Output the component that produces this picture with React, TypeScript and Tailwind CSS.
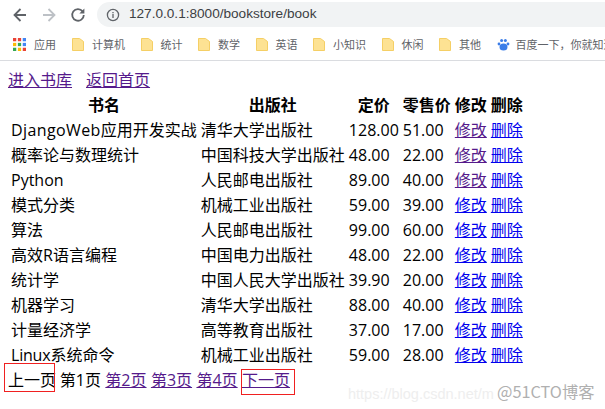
import React from "react";

const font = { fontFamily: '"Open Sans", "Noto Sans CJK SC", sans-serif' };
const cjk = { fontFamily: '"Noto Sans CJK SC", sans-serif' };
const rows: [React.ReactNode, string, string, string, boolean][] = [
  [<><span className="tracking-[0.4px]">DjangoWeb</span>应用开发实战</>, "清华大学出版社", "128.00", "51.00", true],
  ["概率论与数理统计", "中国科技大学出版社", "48.00", "22.00", true],
  ["Python", "人民邮电出版社", "89.00", "40.00", true],
  ["模式分类", "机械工业出版社", "59.00", "39.00", false],
  ["算法", "人民邮电出版社", "99.00", "60.00", false],
  ["高效R语言编程", "中国电力出版社", "48.00", "22.00", false],
  ["统计学", "中国人民大学出版社", "39.90", "20.00", false],
  ["机器学习", "清华大学出版社", "88.00", "40.00", false],
  ["计量经济学", "高等教育出版社", "37.00", "17.00", false],
  [<><span className="tracking-[-0.2px]">Linux</span>系统命令</>, "机械工业出版社", "59.00", "28.00", false],
];
const bookmarks = ["计算机", "统计", "数学", "英语", "小知识", "休闲", "其他"];

function Folder() {
  return (
    <svg width="12" height="13" viewBox="0 0 12 13" className="shrink-0">
      <path d="M.5.5h7l4 3v9H.5z" fill="#fde293" stroke="#f5cf65" />
    </svg>
  );
}

export default function App() {
  return (
    <div className="w-[605px] h-[409px] overflow-hidden bg-white text-[16px] text-black relative font-['Liberation_Sans',sans-serif]">
      <div className="h-[29px] flex items-center pl-[12px] gap-[13px]">
        <svg width="16" height="16" viewBox="0 0 16 16" fill="none" stroke="#5f6368" strokeWidth="1.8"><path d="M14 8H2.5M8.5 2 2.5 8l6 6" /></svg>
        <svg width="16" height="16" viewBox="0 0 16 16" fill="none" stroke="#bdc1c6" strokeWidth="1.8"><path d="M2 8h11.5M7.5 2l6 6-6 6" /></svg>
        <svg width="16" height="16" viewBox="0 0 16 16" fill="none" stroke="#5f6368" strokeWidth="1.8"><path d="M12.6 4.4A5.8 5.8 0 1 0 13.8 8" /><path d="M14.4 1.6v5H9.4z" fill="#5f6368" stroke="none" /></svg>
        <div className="flex-1 h-[25px] ml-[-2px] rounded-l-full bg-[#f1f3f4] flex items-center pl-[9px] gap-[9px]">
          <svg width="14" height="14" viewBox="0 0 14 14" fill="none" stroke="#5f6368" strokeWidth="1.3"><circle cx="7" cy="7" r="5.6" /><path d="M7 6v4M7 4v1.2" /></svg>
          <span className="text-[13.6px] text-[#3c4043]">127.0.0.1:8000/bookstore/book</span>
        </div>
      </div>
      <div className="h-[32px] border-b border-[#dadce0] flex items-center pl-[13px] text-[11px] text-[#5f6368] whitespace-nowrap" style={cjk}>
        <svg width="13" height="13" viewBox="0 0 12 12" className="shrink-0">
          <rect x="0" y="0" width="3" height="3" fill="#ea4335" /><rect x="4.5" y="0" width="3" height="3" fill="#ea4335" /><rect x="9" y="0" width="3" height="3" fill="#4285f4" />
          <rect x="0" y="4.5" width="3" height="3" fill="#fbbc05" /><rect x="4.5" y="4.5" width="3" height="3" fill="#34a853" /><rect x="9" y="4.5" width="3" height="3" fill="#4285f4" />
          <rect x="0" y="9" width="3" height="3" fill="#34a853" /><rect x="4.5" y="9" width="3" height="3" fill="#fbbc05" /><rect x="9" y="9" width="3" height="3" fill="#ea4335" />
        </svg>
        <span className="ml-[8px] mr-[16px]">应用</span>
        {bookmarks.map((b) => (
          <span key={b} className="flex items-center gap-[8px] mr-[15.5px]"><Folder />{b}</span>
        ))}
        <svg width="13" height="13" viewBox="0 0 13 13" className="shrink-0 mr-[6px]" fill="#3b7de8">
          <ellipse cx="6.5" cy="9" rx="4" ry="3.5" /><circle cx="2" cy="6" r="1.4" /><circle cx="11" cy="6" r="1.4" /><circle cx="4.6" cy="2.6" r="1.5" /><circle cx="8.4" cy="2.6" r="1.5" />
        </svg>
        <span>百度一下，你就知道</span>
      </div>
      <div className="pt-[8px] pl-[8px]" style={font}>
        <div className="h-[23px] leading-[23px]">
          <a className="underline text-[#551a8b]">进入书库</a>
          <a className="underline text-[#551a8b] ml-[14px]">返回首页</a>
        </div>
        <table className="border-separate border-spacing-[2px] leading-[23px]">
          <thead>
            <tr>
              {["书名", "出版社", "定价", "零售价", "修改", "删除"].map((h, i) => (
                <th key={h} className={(i === 0 ? "min-w-[187px] " : "") + "px-[1px] py-0 font-bold text-center"}>{h}</th>
              ))}
            </tr>
          </thead>
          <tbody>
            {rows.map((r, i) => (
              <tr key={i}>
                <td className="px-[1px] py-0 whitespace-nowrap">{r[0]}</td>
                <td className="px-[1px] py-0 whitespace-nowrap">{r[1]}</td>
                <td className="px-[1px] py-0">{r[2]}</td>
                <td className="px-[1px] py-0">{r[3]}</td>
                <td className="px-[1px] py-0"><a className={"underline " + (r[4] ? "text-[#551a8b]" : "text-[#0000ee]")}>修改</a></td>
                <td className="px-[1px] py-0"><a className="underline text-[#0000ee]">删除</a></td>
              </tr>
            ))}
          </tbody>
        </table>
        <div className="flex gap-[4.4px] h-[24px] leading-[24px] whitespace-nowrap mt-[-1px]">
          <span className="mr-[-0.6px]">上一页</span>
          <span>第1页</span>
          <a className="underline text-[#551a8b]">第2页</a>
          <a className="underline text-[#551a8b]">第3页</a>
          <a className="underline text-[#551a8b]">第4页</a>
          <a className="underline text-[#551a8b]">下一页</a>
        </div>
      </div>
      <div className="absolute left-[4px] top-[363px] w-[51px] h-[29px] border border-[#f02020]" />
      <div className="absolute left-[241px] top-[369px] w-[54px] h-[26px] border border-[#f02020]" />
      <div className="absolute left-[348px] top-[384px] text-[14.5px] text-[#eeeeee]">https://blog.csdn.net/m</div>
      <div className="absolute left-[497px] top-[379px] text-[16.3px] text-[#b0b0b0]" style={cjk}>@51CTO博客</div>
    </div>
  );
}
